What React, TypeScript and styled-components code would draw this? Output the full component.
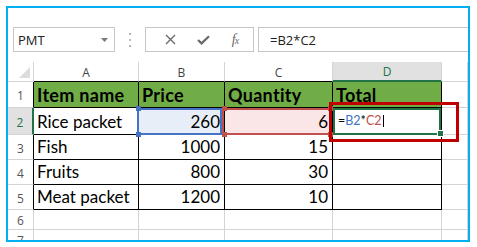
import React from "react";
import styled, { createGlobalStyle } from "styled-components";

const GlobalStyle = createGlobalStyle`
  html, body {
    margin: 0;
    padding: 0;
    background: #fff;
  }
  body {
    font-family: "Open Sans", "Noto Sans", sans-serif;
  }
`;

const GRID = "#d4d4d4";
const INK = "#000";
const XL_GREEN = "#217346";
const HEAD_FILL = "#70ad47";

const Frame = styled.div`
  box-sizing: border-box;
  margin: 6px 0 0 6px;
  width: 464px;
  height: 236px;
  border: 2px solid #00b0f0;
  background: #fff;
  overflow: hidden;
  display: flex;
  flex-direction: column;
`;

const Toolbar = styled.div`
  height: 54px;
  flex-shrink: 0;
  box-sizing: border-box;
  padding: 19px 0 0 5px;
  display: flex;
  align-items: flex-start;
`;

const NameBox = styled.div`
  box-sizing: border-box;
  width: 102px;
  height: 25px;
  border: 1px solid #c6c6c6;
  padding: 0 6px 0 4px;
  display: flex;
  align-items: center;
  justify-content: space-between;
  font-size: 13px;
  color: #222;
`;

const Grip = styled.div`
  width: 30px;
  height: 25px;
  display: flex;
  flex-direction: column;
  align-items: center;
  justify-content: center;
  gap: 4px;

  & span {
    width: 2px;
    height: 2px;
    background: #b8b8b8;
  }
`;

const FxBox = styled.div`
  box-sizing: border-box;
  width: 109px;
  height: 25px;
  border: 1px solid #c6c6c6;
  display: flex;
  align-items: center;
  justify-content: space-around;
  padding: 0 4px 0 8px;
  color: #6a6a6a;
`;

const FxLabel = styled.span`
  font-family: "Liberation Serif", "DejaVu Serif", serif;
  font-style: italic;
  font-size: 14px;
  color: #6a6a6a;
  letter-spacing: -1px;

  & small {
    font-size: 10px;
  }
`;

const FormulaInput = styled.div`
  box-sizing: border-box;
  flex: 1;
  height: 25px;
  margin-left: 4px;
  border: 1px solid #c6c6c6;
  border-right: none;
  padding-left: 11px;
  display: flex;
  align-items: center;
  font-size: 13px;
  color: #222;
`;

const Sheet = styled.div`
  display: grid;
  grid-template-columns: 26px 105px 86px 108px 109px 1fr;
  grid-template-rows: 20px 26px 27px 25px 25px 25px 20px 20px;
`;

type CellProps = {
  $right?: string;
  $bottom?: string;
  $rw?: number;
  $bw?: number;
  $bg?: string;
};

const Cell = styled.div<CellProps>`
  position: relative;
  box-sizing: border-box;
  min-width: 0;
  border-right: ${(p) => p.$rw ?? 1}px solid ${(p) => p.$right ?? GRID};
  border-bottom: ${(p) => p.$bw ?? 1}px solid ${(p) => p.$bottom ?? GRID};
  background: ${(p) => p.$bg ?? "transparent"};
`;

const ColHead = styled(Cell)<{ $active?: boolean }>`
  display: flex;
  align-items: center;
  justify-content: center;
  font-size: 12px;
  color: ${(p) => (p.$active ? XL_GREEN : "#444")};
  padding-top: 1px;
`;

const RowHead = styled(Cell)<{ $active?: boolean }>`
  display: flex;
  align-items: center;
  justify-content: center;
  font-size: 12px;
  color: ${(p) => (p.$active ? XL_GREEN : "#555")};
  padding-top: 2px;
`;

const Corner = styled(Cell)`
  & svg {
    position: absolute;
    right: 3px;
    bottom: 3px;
  }
`;

const DataCell = styled(Cell)<{ $num?: boolean; $bold?: boolean }>`
  display: flex;
  align-items: flex-end;
  justify-content: ${(p) => (p.$num ? "flex-end" : "flex-start")};
  padding: 0 ${(p) => (p.$num ? "4px" : "0")} 2px ${(p) => (p.$num ? "0" : "3px")};
  font-family: Lato, "Open Sans", sans-serif;
  font-size: ${(p) => (p.$bold ? 18 : 17)}px;
  font-weight: ${(p) => (p.$bold ? 700 : 400)};
  letter-spacing: ${(p) => (p.$bold ? "0.3px" : "0")};
  line-height: 20px;
  color: #000;
  white-space: nowrap;
`;

const EditText = styled.div`
  display: flex;
  align-items: flex-end;
  height: 100%;
  box-sizing: border-box;
  padding: 0 0 4px 2px;
  font-family: Lato, "Open Sans", sans-serif;
  font-size: 12.5px;
  line-height: 14px;
  color: #000;
`;

const Ref = styled.span<{ $c: string }>`
  color: ${(p) => p.$c};
`;

const Caret = styled.span`
  display: inline-block;
  width: 1px;
  height: 12px;
  margin-left: 1px;
  margin-bottom: 1px;
  background: #000;
`;

type BoxProps = { $c: string; $w: number; $l: number; $t: number; $r: number; $b: number; $z?: number };

const SelBox = styled.div<BoxProps>`
  position: absolute;
  left: ${(p) => p.$l}px;
  top: ${(p) => p.$t}px;
  right: ${(p) => p.$r}px;
  bottom: ${(p) => p.$b}px;
  border: ${(p) => p.$w}px solid ${(p) => p.$c};
  z-index: ${(p) => p.$z ?? 2};
  pointer-events: none;
`;

const Handle = styled.div<{ $c: string; $x: number; $y: number; $edge?: "right" }>`
  position: absolute;
  width: 5px;
  height: 5px;
  background: ${(p) => p.$c};
  ${(p) => (p.$edge === "right" ? `right: ${p.$x}px;` : `left: ${p.$x}px;`)}
  top: ${(p) => p.$y}px;
  z-index: 3;
`;

const FillHandle = styled.div`
  position: absolute;
  right: -2px;
  bottom: -2px;
  width: 5px;
  height: 5px;
  background: ${XL_GREEN};
  outline: 1px solid #fff;
  z-index: 3;
`;

// E is only partly in view, so its letter sits off-screen
const cols = ["A", "B", "C", "D", ""];

const data: string[][] = [
  ["Item name", "Price", "Quantity", "Total"],
  ["Rice packet", "260", "6", ""],
  ["Fish", "1000", "15", ""],
  ["Fruits", "800", "30", ""],
  ["Meat packet", "1200", "10", ""],
  ["", "", "", ""],
  ["", "", "", ""],
];

const CancelIcon = () => (
  <svg width="11" height="11" viewBox="0 0 11 11">
    <path d="M1 1 L10 10 M10 1 L1 10" stroke="#6a6a6a" strokeWidth="1.4" fill="none" />
  </svg>
);

const EnterIcon = () => (
  <svg width="13" height="10" viewBox="0 0 13 10">
    <path d="M1 5 L4.6 8.4 L12 1.2" stroke="#6a6a6a" strokeWidth="2.2" fill="none" />
  </svg>
);

const DropArrow = () => (
  <svg width="7" height="4" viewBox="0 0 7 4">
    <path d="M0 0 H7 L3.5 4 Z" fill="#7a7a7a" />
  </svg>
);

const App: React.FC = () => {
  return (
    <>
      <GlobalStyle />
      <Frame>
        <Toolbar>
          <NameBox>
            <span>PMT</span>
            <DropArrow />
          </NameBox>
          <Grip>
            <span />
            <span />
            <span />
          </Grip>
          <FxBox>
            <CancelIcon />
            <EnterIcon />
            <FxLabel>
              f<small>x</small>
            </FxLabel>
          </FxBox>
          <FormulaInput>=B2*C2</FormulaInput>
        </Toolbar>

        <Sheet>
          <Corner>
            <svg width="11" height="11" viewBox="0 0 11 11">
              <path d="M11 0 V11 H0 Z" fill="#dcdcdc" />
            </svg>
          </Corner>
          {cols.map((c, i) => {
            const active = c === "D";
            const inTable = c !== "";
            return (
              <ColHead
                key={i}
                $active={active}
                $bg={active ? "#e1e1e1" : "#fff"}
                $bottom={active ? XL_GREEN : inTable ? INK : GRID}
                $bw={active ? 2 : 1}
              >
                {c}
              </ColHead>
            );
          })}

          {data.map((row, i) => {
            const n = i + 1;
            const inTable = n <= 5;
            const active = n === 2;
            return (
              <React.Fragment key={n}>
                <RowHead
                  $active={active}
                  $bg={active ? "#e1e1e1" : "#fff"}
                  $right={active ? XL_GREEN : inTable ? INK : GRID}
                  $rw={active ? 2 : 1}
                >
                  {n}
                </RowHead>
                {row.map((v, j) => {
                  const isHead = n === 1;
                  const num = j === 1 || j === 2;
                  let bg: string | undefined;
                  if (isHead) bg = HEAD_FILL;
                  if (n === 2 && j === 1) bg = "#e8eef8";
                  if (n === 2 && j === 2) bg = "#fae6e6";
                  return (
                    <DataCell
                      key={j}
                      $num={num && !isHead}
                      $bold={isHead}
                      $bg={bg}
                      $right={inTable ? INK : GRID}
                      $bottom={inTable ? INK : GRID}
                    >
                      {n === 2 && j === 1 && (
                        <>
                          <SelBox $c="#4472c4" $w={2} $l={-2} $t={0} $r={2} $b={-1} />
                          <Handle $c="#4472c4" $x={-3} $y={-2} />
                          <Handle $c="#4472c4" $x={-3} $y={24} />
                        </>
                      )}
                      {n === 2 && j === 2 && (
                        <>
                          <SelBox $c="#c0504d" $w={2} $l={-3} $t={0} $r={1} $b={-1} />
                          <Handle $c="#c0504d" $x={-3} $y={-2} />
                          <Handle $c="#c0504d" $x={-3} $y={24} />
                          <Handle $c="#c0504d" $x={-1} $y={-2} $edge="right" />
                          <Handle $c="#c0504d" $x={-1} $y={24} $edge="right" />
                        </>
                      )}
                      {n === 2 && j === 3 ? (
                        <>
                          <SelBox $c={XL_GREEN} $w={2} $l={0} $t={0} $r={0} $b={-1} />
                          <FillHandle />
                          <SelBox $c="#c00000" $w={3} $l={-4} $t={-6} $r={-18} $b={-8} $z={4} />
                          <EditText>
                            =<Ref $c="#4472c4">B2</Ref>*<Ref $c="#c0504d">C2</Ref>
                            <Caret />
                          </EditText>
                        </>
                      ) : (
                        v
                      )}
                    </DataCell>
                  );
                })}
                <Cell $right={GRID} $bottom={GRID} />
              </React.Fragment>
            );
          })}
        </Sheet>
      </Frame>
    </>
  );
};

export default App;
